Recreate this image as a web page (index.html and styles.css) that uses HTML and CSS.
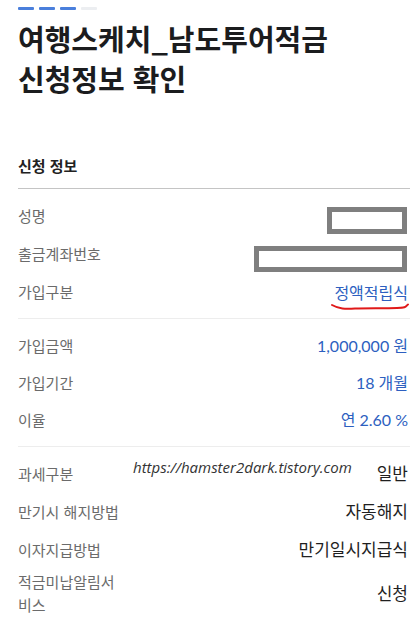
FILE: index.html
```html
<!DOCTYPE html>
<html lang="ko">
<head>
<meta charset="utf-8">
<title>신청정보 확인</title>
<link rel="stylesheet" href="styles.css">
</head>
<body>
<div class="page">
  <div class="progress">
    <span class="dash"></span><span class="dash"></span><span class="dash"></span><span class="dash off"></span>
  </div>
  <h1 class="title">여행스케치_남도투어적금<br>신청정보 확인</h1>
  <h2 class="section-title">신청 정보</h2>

  <div class="group first">
    <div class="row"><span class="label">성명</span><span class="mask mask-name"></span></div>
    <div class="row"><span class="label">출금계좌번호</span><span class="mask mask-acct"></span></div>
    <div class="row"><span class="label">가입구분</span><span class="value blue marked">정액적립식<svg class="mark" width="78" height="8" viewBox="0 0 78 8"><path d="M1 2 C 8 6, 14 6, 24 5.5 S 55 5.5, 66 5 S 74 3.5, 77 1.5" fill="none" stroke="#e01919" stroke-width="2" stroke-linecap="round"/></svg></span></div>
  </div>

  <div class="group mid">
    <div class="row tight"><span class="label">가입금액</span><span class="value blue">1,000,000 원</span></div>
    <div class="row tight"><span class="label">가입기간</span><span class="value blue">18 개월</span></div>
    <div class="row tight"><span class="label">이율</span><span class="value blue">연 2.60 %</span></div>
  </div>

  <div class="group last">
    <div class="row"><span class="label">과세구분</span><span class="value">일반</span></div>
    <div class="row"><span class="label">만기시 해지방법</span><span class="value">자동해지</span></div>
    <div class="row"><span class="label">이자지급방법</span><span class="value">만기일시지급식</span></div>
    <div class="row multi"><span class="label">적금미납알림서비스</span><span class="value">신청</span></div>
  </div>

  <div class="watermark">https://hamster2dark.tistory.com</div>
</div>
</body>
</html>
```

FILE: styles.css
```css
html, body {
  margin: 0;
  padding: 0;
  background: #ffffff;
}

body {
  font-family: "Noto Sans CJK KR", "Noto Sans", sans-serif;
  color: #222222;
  overflow: hidden;
}

.page {
  position: relative;
  padding: 7px 4px 0 18px;
}

.progress {
  display: flex;
  gap: 5px;
}

.dash {
  display: block;
  width: 16px;
  height: 3px;
  border-radius: 1px;
  background: #4a7fdc;
}

.dash.off {
  background: #eceef1;
}

.title {
  margin: 8px 0 0;
  font-size: 29px;
  line-height: 40px;
  font-weight: 700;
  color: #1b1c1e;
}

.section-title {
  margin: 57px 0 0;
  padding-bottom: 11px;
  font-size: 15px;
  line-height: 22px;
  font-weight: 700;
  color: #222222;
  border-bottom: 1px solid #c4c4c4;
}

.group {
  padding: 7px 0 8px;
  border-bottom: 1px solid #ededed;
}

.group.mid {
  padding: 8px 0;
}

.group.last {
  border-bottom: none;
}

.row {
  display: flex;
  align-items: center;
  justify-content: space-between;
  min-height: 38px;
  padding-right: 2px;
}

.row.tight {
  min-height: 37px;
}

.row.multi {
  padding-top: 2px;
}

.label {
  width: 102px;
  font-size: 15px;
  line-height: 23px;
  color: #6b6b6b;
}

.value {
  font-size: 17px;
  line-height: 24px;
  color: #1f1f1f;
  text-align: right;
}

.value.blue {
  font-family: Lato, "Noto Sans CJK KR", sans-serif;
  font-size: 16px;
  color: #2d5fc0;
}

.value.marked {
  position: relative;
  font-family: "Noto Sans CJK KR", sans-serif;
  font-size: 16px;
  margin-top: 2px;
}

.mark {
  position: absolute;
  left: -3px;
  top: 23px;
}

.mask {
  display: block;
  box-sizing: border-box;
  border: 5px solid #7f7f7f;
  background: #ffffff;
  margin-top: 11px;
  margin-right: 1px;
}

.mask-name {
  width: 80px;
  height: 27px;
}

.mask-acct {
  width: 153px;
  height: 26px;
}

.watermark {
  position: absolute;
  left: 133px;
  top: 457px;
  font-family: "Open Sans", sans-serif;
  font-style: italic;
  font-size: 15px;
  line-height: 20px;
  color: #333333;
}
```
